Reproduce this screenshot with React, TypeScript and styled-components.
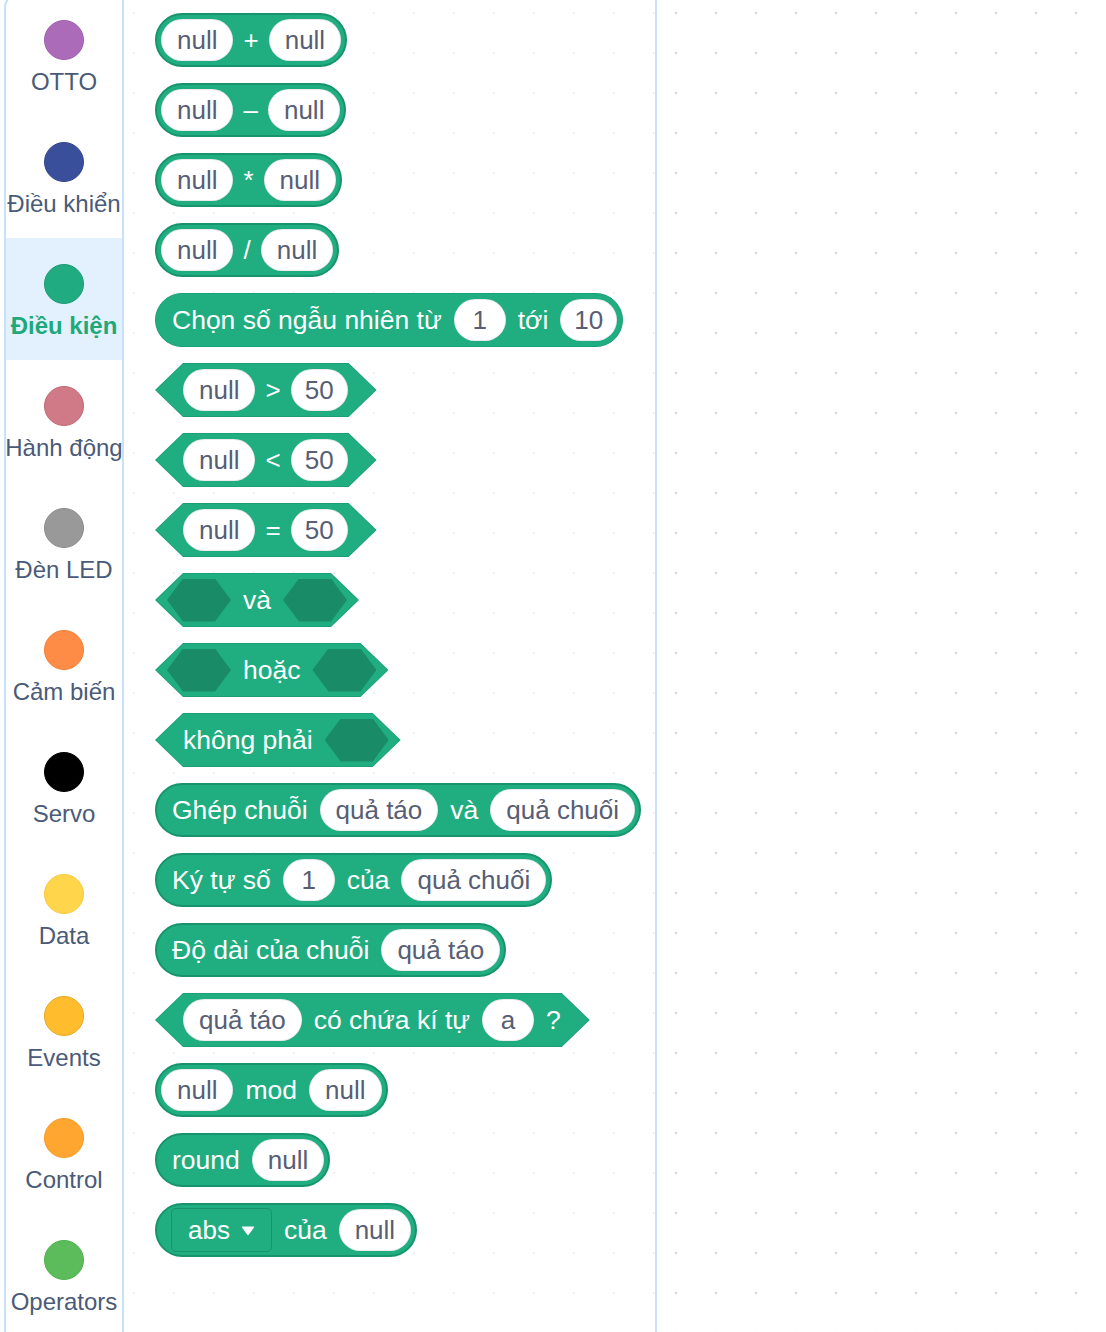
import React from 'react'
import styled, { createGlobalStyle } from 'styled-components'

// ----- Types -----

type Part =
  | { t: 'text'; v: string }
  | { t: 'op'; v: string }
  | { t: 'pill'; v: string }
  | { t: 'slot' }
  | { t: 'menu'; v: string }

interface BlockDef {
  shape: 'round' | 'hex'
  thick?: boolean
  parts: Part[]
}

interface Category {
  name: string
  color: string
  edge: string
  active?: boolean
}

// ----- Data -----

const categories: Category[] = [
  { name: 'OTTO', color: '#ab6bb9', edge: '#9e5fae' },
  { name: 'Điều khiển', color: '#3a4f9c', edge: '#33468c' },
  { name: 'Điều kiện', color: '#20ac80', edge: '#1b9b72', active: true },
  { name: 'Hành động', color: '#cf7a86', edge: '#c46573' },
  { name: 'Đèn LED', color: '#999999', edge: '#8c8c8c' },
  { name: 'Cảm biến', color: '#ff8c46', edge: '#f57e34' },
  { name: 'Servo', color: '#000000', edge: '#000000' },
  { name: 'Data', color: '#ffd54c', edge: '#fbc93a' },
  { name: 'Events', color: '#ffbd2e', edge: '#e5a51d' },
  { name: 'Control', color: '#ffa631', edge: '#f99a25' },
  { name: 'Operators', color: '#5cbc5c', edge: '#4fb04f' },
]

const txt = (v: string): Part => ({ t: 'text', v })
const op = (v: string): Part => ({ t: 'op', v })
const pill = (v: string): Part => ({ t: 'pill', v })
const slot: Part = { t: 'slot' }

const blocks: BlockDef[] = [
  { shape: 'round', thick: true, parts: [pill('null'), op('+'), pill('null')] },
  { shape: 'round', thick: true, parts: [pill('null'), op('–'), pill('null')] },
  { shape: 'round', thick: true, parts: [pill('null'), op('*'), pill('null')] },
  { shape: 'round', thick: true, parts: [pill('null'), op('/'), pill('null')] },
  { shape: 'round', parts: [txt('Chọn số ngẫu nhiên từ'), pill('1'), txt('tới'), pill('10')] },
  { shape: 'hex', parts: [pill('null'), op('>'), pill('50')] },
  { shape: 'hex', parts: [pill('null'), op('<'), pill('50')] },
  { shape: 'hex', parts: [pill('null'), op('='), pill('50')] },
  { shape: 'hex', parts: [slot, txt('và'), slot] },
  { shape: 'hex', parts: [slot, txt('hoặc'), slot] },
  { shape: 'hex', parts: [txt('không phải'), slot] },
  { shape: 'round', thick: true, parts: [txt('Ghép chuỗi'), pill('quả táo'), txt('và'), pill('quả chuối')] },
  { shape: 'round', thick: true, parts: [txt('Ký tự số'), pill('1'), txt('của'), pill('quả chuối')] },
  { shape: 'round', thick: true, parts: [txt('Độ dài của chuỗi'), pill('quả táo')] },
  { shape: 'hex', parts: [pill('quả táo'), txt('có chứa kí tự'), pill('a'), txt('?')] },
  { shape: 'round', thick: true, parts: [pill('null'), txt('mod'), pill('null')] },
  { shape: 'round', thick: true, parts: [txt('round'), pill('null')] },
  { shape: 'round', thick: true, parts: [{ t: 'menu', v: 'abs' }, txt('của'), pill('null')] },
]

// ----- Styles -----

const GlobalStyle = createGlobalStyle`
  html, body {
    margin: 0;
    padding: 0;
    background: #fff;
    overflow: hidden;
  }
  body {
    font-family: "Liberation Sans", Arial, sans-serif;
  }
`

const Page = styled.div`
  display: flex;
  width: 1106px;
  height: 1332px;
  overflow: hidden;
  background: #fff;
`

const Sidebar = styled.nav`
  flex: 0 0 auto;
  display: flex;
  flex-direction: column;
  width: 116px;
  margin: -8px 0 0 4px;
  border-left: 2px solid #c7e1fa;
  border-right: 2px solid #c7e1fa;
  border-top: 2px solid #c7e1fa;
  border-top-left-radius: 16px;
`

const CategoryItem = styled.div<{ $active?: boolean }>`
  flex: 0 0 122px;
  display: flex;
  flex-direction: column;
  align-items: center;
  padding-top: 26px;
  box-sizing: border-box;
  background: ${p => (p.$active ? '#e2f1fd' : 'transparent')};
`

const Dot = styled.div<{ $color: string; $edge: string }>`
  width: 40px;
  height: 40px;
  box-sizing: border-box;
  border-radius: 50%;
  background: ${p => p.$color};
  border: 1px solid ${p => p.$edge};
`

const CategoryName = styled.span<{ $active?: boolean }>`
  margin-top: 8px;
  font-size: 24px;
  line-height: 28px;
  white-space: nowrap;
  color: ${p => (p.$active ? '#1fa97b' : '#4a5a78')};
  font-weight: ${p => (p.$active ? 700 : 400)};
`

const Flyout = styled.section`
  flex: 0 0 auto;
  display: flex;
  flex-direction: column;
  gap: 16px;
  width: 500px;
  padding: 13px 0 0 31px;
  border-right: 2px solid #c7e1fa;
  background-color: #fff;
  background-image: radial-gradient(circle, #f0f0f0 1.2px, transparent 1.6px);
  background-size: 40px 40px;
  background-position: -10px -7px;
`

const Workspace = styled.main`
  flex: 1;
  background-color: #fff;
  background-image: radial-gradient(circle, #d6d6d6 1.2px, transparent 1.6px);
  background-size: 40px 40px;
  background-position: -1px -7px;
`

const RoundBlock = styled.div<{ $thick?: boolean }>`
  display: inline-flex;
  align-items: center;
  align-self: flex-start;
  height: 54px;
  box-sizing: border-box;
  padding: 0 ${p => (p.$thick ? 4 : 5)}px;
  border-radius: 27px;
  background: #20ad80;
  border: ${p => (p.$thick ? '2px solid #17946c' : '1px solid #1c9f76')};
`

const HexShell = styled.div`
  display: inline-flex;
  align-self: flex-start;
  padding: 1px;
  background: #1c9e76;
  clip-path: polygon(28px 0, calc(100% - 28px) 0, 100% 50%, calc(100% - 28px) 100%, 28px 100%, 0 50%);
`

const HexBody = styled.div`
  display: flex;
  align-items: center;
  height: 52px;
  padding: 0 28px 0 27px;
  background: #20ad80;
  clip-path: polygon(27px 0, calc(100% - 27px) 0, 100% 50%, calc(100% - 27px) 100%, 27px 100%, 0 50%);
`

const Label = styled.span<{ $op?: boolean }>`
  margin: 0 ${p => (p.$op ? 10 : 12)}px;
  font-size: ${p => (p.$op ? 26 : 26.5)}px;
  line-height: 30px;
  color: #fff;
  white-space: nowrap;

  ${RoundBlock} > &:first-child {
    margin-left: 11px;
  }
  ${HexBody} > &:first-child {
    margin-left: 0;
  }
  ${HexBody} > &:last-child {
    margin-right: 0;
  }
`

const Pill = styled.span<{ $short?: boolean }>`
  display: inline-flex;
  align-items: center;
  justify-content: center;
  height: 42px;
  min-width: 52px;
  box-sizing: border-box;
  padding: 0 ${p => (p.$short ? 13 : 15)}px;
  border-radius: 21px;
  background: #fff;
  border: 1px solid rgba(0, 0, 0, 0.08);
  color: #575e75;
  font-size: 26px;
  white-space: nowrap;
`

const Slot = styled.span`
  width: 64px;
  height: 43px;
  background: #1a8b67;
  clip-path: polygon(16px 0, 48px 0, 100% 50%, 48px 100%, 16px 100%, 0 50%);

  &:first-child {
    margin-left: -16px;
  }
  &:last-child {
    margin-right: -17px;
  }
`

const Menu = styled.span`
  display: inline-flex;
  align-items: center;
  gap: 11px;
  height: 44px;
  box-sizing: border-box;
  padding: 0 16px;
  border: 1px solid #17946c;
  border-radius: 5px;
  color: #fff;
  font-size: 26px;

  &:first-child {
    margin-left: 10px;
  }
`

// ----- Component Logic -----

const Caret: React.FC = () => (
  <svg width="14" height="11" viewBox="0 0 14 11">
    <path d="M1.5 1.5 H12.5 Q13.6 1.5 13 2.6 L7.9 9.6 Q7 10.7 6.1 9.6 L1 2.6 Q0.4 1.5 1.5 1.5 Z" fill="#fff" />
  </svg>
)

const renderPart = (part: Part, i: number) => {
  switch (part.t) {
    case 'text':
      return <Label key={i}>{part.v}</Label>
    case 'op':
      return (
        <Label key={i} $op>
          {part.v}
        </Label>
      )
    case 'pill':
      return (
        <Pill key={i} $short={part.v.length <= 2}>
          {part.v}
        </Pill>
      )
    case 'slot':
      return <Slot key={i} />
    case 'menu':
      return (
        <Menu key={i}>
          {part.v}
          <Caret />
        </Menu>
      )
  }
}

const Block: React.FC<{ def: BlockDef }> = ({ def }) =>
  def.shape === 'hex' ? (
    <HexShell>
      <HexBody>{def.parts.map(renderPart)}</HexBody>
    </HexShell>
  ) : (
    <RoundBlock $thick={def.thick}>{def.parts.map(renderPart)}</RoundBlock>
  )

const App: React.FC = () => (
  <>
    <GlobalStyle />
    <Page>
      <Sidebar>
        {categories.map(c => (
          <CategoryItem key={c.name} $active={c.active}>
            <Dot $color={c.color} $edge={c.edge} />
            <CategoryName $active={c.active}>{c.name}</CategoryName>
          </CategoryItem>
        ))}
      </Sidebar>
      <Flyout>
        {blocks.map((b, i) => (
          <Block key={i} def={b} />
        ))}
      </Flyout>
      <Workspace />
    </Page>
  </>
)

export default App
